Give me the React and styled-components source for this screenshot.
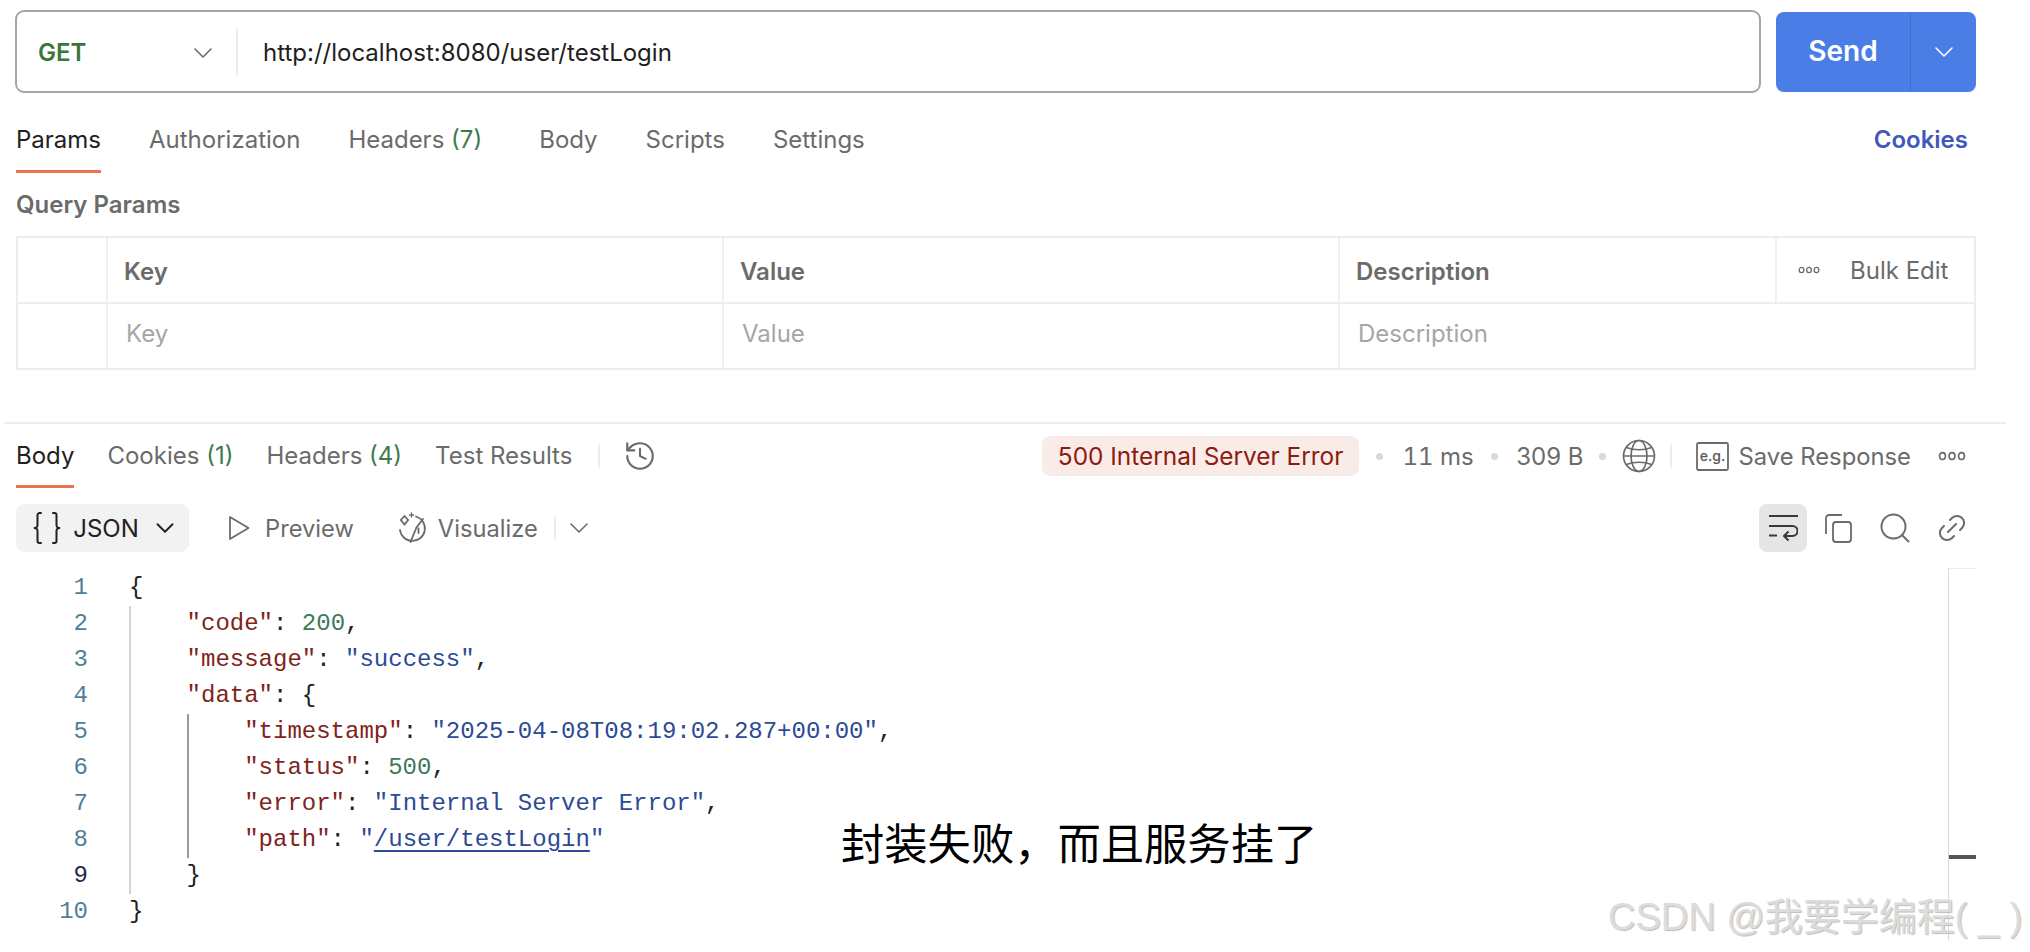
import React from 'react';
import styled, { createGlobalStyle } from 'styled-components';
import { ChevronDown, History, Search, Link2 } from 'lucide-react';

const GlobalStyle = createGlobalStyle`
  html, body {
    margin: 0;
    padding: 0;
    background: #fff;
  }
  body {
    font-family: Inter, "Noto Sans", sans-serif;
  }
  * {
    box-sizing: border-box;
  }
`;

const requestTabs = [
  { label: 'Params', active: true },
  { label: 'Authorization' },
  { label: 'Headers', count: '(7)', extra: true },
  { label: 'Body' },
  { label: 'Scripts' },
  { label: 'Settings' },
];

const responseTabs = [
  { label: 'Body', active: true },
  { label: 'Cookies', count: '(1)' },
  { label: 'Headers', count: '(4)' },
  { label: 'Test Results' },
];

// [kind, text] per token, depth = number of indent guides
const codeLines = [
  { depth: 0, tokens: [['punct', '{']] },
  { depth: 1, tokens: [['key', '"code"'], ['punct', ': '], ['num', '200'], ['punct', ',']] },
  { depth: 1, tokens: [['key', '"message"'], ['punct', ': '], ['str', '"success"'], ['punct', ',']] },
  { depth: 1, tokens: [['key', '"data"'], ['punct', ': {']] },
  { depth: 2, tokens: [['key', '"timestamp"'], ['punct', ': '], ['str', '"2025-04-08T08:19:02.287+00:00"'], ['punct', ',']] },
  { depth: 2, tokens: [['key', '"status"'], ['punct', ': '], ['num', '500'], ['punct', ',']] },
  { depth: 2, tokens: [['key', '"error"'], ['punct', ': '], ['str', '"Internal Server Error"'], ['punct', ',']] },
  { depth: 2, tokens: [['key', '"path"'], ['punct', ': '], ['str', '"'], ['link', '/user/testLogin'], ['str', '"']] },
  { depth: 1, active: true, tokens: [['punct', '}']] },
  { depth: 0, tokens: [['punct', '}']] },
];

const DotsIcon = ({ size = 28 }) => (
  <svg width={size} height={size * 0.36} viewBox="0 0 28 10" fill="none" stroke="#6b6b6b" strokeWidth="1.6">
    <ellipse cx="4.5" cy="5" rx="3" ry="3.4" />
    <ellipse cx="14" cy="5" rx="3" ry="3.4" />
    <ellipse cx="23.5" cy="5" rx="3" ry="3.4" />
  </svg>
);

const PlayIcon = () => (
  <svg width="22" height="26" viewBox="0 0 22 26" fill="none" stroke="#6b6b6b" strokeWidth="1.8" strokeLinejoin="round">
    <path d="M2 2v22L20.500 13z" />
  </svg>
);

const VisualizeIcon = () => (
  <svg width="32" height="32" viewBox="0 0 32 32" fill="none" stroke="#6b6b6b" strokeWidth="1.8" strokeLinecap="round">
    <path d="M18 4.500a12.500 12.500 0 1 1-16 13.500" />
    <path d="M6.500 4l3.600 4-3.600 4.500L2.800 8z" />
    <path d="M13.500 1v4M11.500 3h4" strokeWidth="1.3" />
    <path d="M25 7l-6.500 8.500-6 14.500" />
    <path d="M20.500 16.500v4.500" />
  </svg>
);

const GlobeIcon = () => (
  <svg width="34" height="34" viewBox="0 0 34 34" fill="none" stroke="#6b6b6b" strokeWidth="1.7">
    <circle cx="17" cy="17" r="15.500" />
    <ellipse cx="17" cy="17" rx="8" ry="15.500" />
    <path d="M4.500 8.500c7 3 18 3 25 0M4.500 25.500c7-3 18-3 25 0M1.500 17h31" />
  </svg>
);

const ExampleIcon = () => (
  <svg width="33" height="29" viewBox="0 0 33 29">
    <rect x="1" y="1" width="31" height="27" rx="1.500" fill="none" stroke="#6b6b6b" strokeWidth="1.8" />
    <text x="16.500" y="19" textAnchor="middle" fontFamily="Inter, sans-serif" fontSize="14" fontWeight="500" fill="#555">e.g.</text>
  </svg>
);

const WrapIcon = () => (
  <svg width="30" height="28" viewBox="0 0 30 28" fill="none" stroke="#3a3a3a" strokeWidth="2">
    <path d="M1 2h29M1 12h23.500a4.500 4.500 0 0 1 0 10H16" />
    <path d="M20.500 17.500L16 22l4.500 4.500M1 21.500h8" />
  </svg>
);

const CopyIcon = () => (
  <svg width="28" height="30" viewBox="0 0 28 30" fill="none" stroke="#6b6b6b" strokeWidth="1.8">
    <path d="M2 21V5a3 3 0 0 1 3-3h13" />
    <rect x="9" y="9" width="18" height="20" rx="3" />
  </svg>
);

const BracesIcon = () => (
  <svg width="30" height="34" viewBox="0 0 30 34" fill="none" stroke="#212121" strokeWidth="2" strokeLinecap="round">
    <path d="M9 2H7.500a2 2 0 0 0-2 2v9.500a3 3 0 0 1-3.500 3.500 3 3 0 0 1 3.500 3.500V30a2 2 0 0 0 2 2H9" />
    <path d="M21 2h1.500a2 2 0 0 1 2 2v9.500a3 3 0 0 0 3.500 3.500 3 3 0 0 0-3.500 3.500V30a2 2 0 0 1-2 2H21" />
  </svg>
);

const App = () => {
  return (
    <Page>
      <GlobalStyle />

      <RequestPane>
        <UrlRow>
          <UrlBox>
            <MethodSelect>
              <MethodName>GET</MethodName>
              <ChevronDown size={32} strokeWidth={1.2} color="#6b6b6b" />
            </MethodSelect>
            <UrlText>http://localhost:8080/user/testLogin</UrlText>
          </UrlBox>
          <SendGroup>
            <SendLabel>Send</SendLabel>
            <SendArrow>
              <ChevronDown size={32} strokeWidth={1.2} color="#fff" />
            </SendArrow>
          </SendGroup>
        </UrlRow>

        <TabRow>
          <Tabs $gap={48}>
            {requestTabs.map((tab) => (
              <Tab key={tab.label} $active={tab.active} $extra={tab.extra}>
                {tab.label}
                {tab.count && <TabCount> {tab.count}</TabCount>}
              </Tab>
            ))}
          </Tabs>
          <CookiesLink>Cookies</CookiesLink>
        </TabRow>

        <SectionTitle>Query Params</SectionTitle>

        <ParamsTable>
          <HeadCell />
          <HeadCell $pad={16}>Key</HeadCell>
          <HeadCell $pad={16}>Value</HeadCell>
          <HeadCell $pad={16}>Description</HeadCell>
          <BulkCell>
            <DotsIcon size={22} />
            <span>Bulk Edit</span>
          </BulkCell>
          <InputCell />
          <InputCell $pad={18}>Key</InputCell>
          <InputCell $pad={18}>Value</InputCell>
          <InputCell $pad={18} $span={2} $last>Description</InputCell>
        </ParamsTable>
      </RequestPane>

      <ResponsePane>
        <ResponseBar>
          <Tabs $gap={33}>
            {responseTabs.map((tab) => (
              <ResponseTab key={tab.label} $active={tab.active}>
                {tab.label}
                {tab.count && <TabCount> {tab.count}</TabCount>}
              </ResponseTab>
            ))}
            <HistoryWrap>
              <BarDivider />
              <History size={34} strokeWidth={1.5} color="#6b6b6b" />
            </HistoryWrap>
          </Tabs>
          <ResponseMeta>
            <StatusBadge>500 Internal Server Error</StatusBadge>
            <MetaDot />
            <MetaText $left={2} $tabular>11 ms</MetaText>
            <MetaDot />
            <MetaText $left={1.5}>309 B</MetaText>
            <MetaDot $left={-2} />
            <GlobeWrap>
              <GlobeIcon />
            </GlobeWrap>
            <MetaDivider />
            <ExampleIcon />
            <SaveText>Save Response</SaveText>
            <MoreButton>
              <DotsIcon />
            </MoreButton>
          </ResponseMeta>
        </ResponseBar>

        <ViewBar>
          <ViewLeft>
            <FormatPill>
              <BracesIcon />
              <span>JSON</span>
              <ChevronDown size={30} strokeWidth={1.5} color="#212121" />
            </FormatPill>
            <ViewOption $gap={15} $right={44}>
              <PlayIcon />
              <span>Preview</span>
            </ViewOption>
            <ViewOption $gap={8} $right={16}>
              <VisualizeIcon />
              <span>Visualize</span>
            </ViewOption>
            <BarDivider />
            <ViewChevron>
              <ChevronDown size={32} strokeWidth={1.2} color="#6b6b6b" />
            </ViewChevron>
          </ViewLeft>
          <ViewTools>
            <ToolButton $active><WrapIcon /></ToolButton>
            <ToolButton><CopyIcon /></ToolButton>
            <ToolButton><Search size={36} strokeWidth={1.3} color="#6b6b6b" /></ToolButton>
            <ToolButton><Link2 size={34} strokeWidth={1.4} color="#6b6b6b" style={{ transform: 'rotate(-45deg)' }} /></ToolButton>
          </ViewTools>
        </ViewBar>

        <CodeArea>
          <CodeLines>
            {codeLines.map((line, index) => (
              <CodeLine key={index}>
                <LineNumber $active={line.active}>{index + 1}</LineNumber>
                {Array.from({ length: line.depth }).map((_, level) => (
                  <IndentGuide key={level} $level={level} />
                ))}
                {line.tokens.map(([kind, text], i) => (
                  <Token key={i} $kind={kind}>{text}</Token>
                ))}
              </CodeLine>
            ))}
          </CodeLines>
          <Minimap>
            <MinimapMark />
          </Minimap>
        </CodeArea>
      </ResponsePane>

      <Annotation>封装失败，而且服务挂了</Annotation>
      <Watermark>CSDN @我要学编程( _ )</Watermark>
    </Page>
  );
};

export default App;

const tokenColors = {
  punct: '#212121',
  key: '#80231c',
  str: '#2d4a96',
  link: '#2d4a96',
  num: '#3d7a5a',
};

const Page = styled.div`
  position: relative;
  width: 2030px;
  height: 952px;
  overflow: hidden;
  background: #fff;
  color: #6b6b6b;
`;

const RequestPane = styled.div`
  padding: 10px 54px 0 15px;
`;

const UrlRow = styled.div`
  display: flex;
  align-items: flex-start;
  gap: 15px;
`;

const UrlBox = styled.div`
  flex: 1;
  height: 83px;
  display: flex;
  align-items: center;
  border: 2px solid #a6a6a6;
  border-radius: 9px;
`;

const MethodSelect = styled.div`
  width: 221px;
  height: 48px;
  padding: 2px 17px 0 21px;
  display: flex;
  align-items: center;
  justify-content: space-between;
  border-right: 2px solid #ededed;
`;

const MethodName = styled.span`
  font-size: 24px;
  font-weight: 600;
  color: #38763c;
`;

const UrlText = styled.span`
  margin: 2px 0 0 25px;
  font-size: 24px;
  color: #212121;
`;

const SendGroup = styled.div`
  width: 200px;
  height: 80px;
  margin-top: 2px;
  display: flex;
  background: #4b7de6;
  border-radius: 8px;
  color: #fff;
`;

const SendLabel = styled.div`
  width: 134px;
  padding-bottom: 2px;
  display: flex;
  align-items: center;
  justify-content: center;
  font-size: 28px;
  font-weight: 600;
`;

const SendArrow = styled.div`
  flex: 1;
  display: flex;
  align-items: center;
  justify-content: center;
  border-left: 1px solid #3f6dd0;
`;

const TabRow = styled.div`
  margin: 31px 8px 0 1px;
  display: flex;
  justify-content: space-between;
`;

const Tabs = styled.div`
  display: flex;
  gap: ${(props) => props.$gap}px;
`;

const Tab = styled.div`
  height: 49px;
  padding-bottom: 14px;
  margin-right: ${(props) => (props.$extra ? 9 : 0)}px;
  font-size: 24px;
  line-height: 32px;
  white-space: pre;
  color: ${(props) => (props.$active ? '#212121' : '#6b6b6b')};
  border-bottom: 3px solid ${(props) => (props.$active ? '#e8764c' : 'transparent')};
`;

const ResponseTab = styled(Tab)`
  line-height: 34px;
`;

const TabCount = styled.span`
  color: #3f7a4a;
`;

const CookiesLink = styled.div`
  font-size: 24px;
  line-height: 32px;
  font-weight: 600;
  color: #4257bd;
`;

const SectionTitle = styled.div`
  margin: 17px 0 16px 1px;
  font-size: 24px;
  line-height: 30px;
  font-weight: 600;
  color: #6b6b6b;
`;

const ParamsTable = styled.div`
  margin-left: 1px;
  display: grid;
  grid-template-columns: 90px 616px 616px 437px 1fr;
  grid-template-rows: 66px 64px;
  border: 2px solid #ededed;
`;

const HeadCell = styled.div`
  display: flex;
  align-items: center;
  padding: 2px 0 0 ${(props) => props.$pad || 0}px;
  font-size: 24px;
  font-weight: 600;
  color: #6b6b6b;
  border-right: 2px solid #f0f0f0;
  border-bottom: 2px solid #ededed;
`;

const BulkCell = styled.div`
  display: flex;
  align-items: center;
  gap: 30px;
  padding-left: 21px;
  font-size: 24px;
  color: #6b6b6b;
  border-bottom: 2px solid #ededed;
`;

const InputCell = styled.div`
  grid-column: span ${(props) => props.$span || 1};
  display: flex;
  align-items: center;
  padding: 0 0 5px ${(props) => props.$pad || 0}px;
  font-size: 24px;
  color: #a6a6a6;
  border-right: ${(props) => (props.$last ? 'none' : '2px solid #f0f0f0')};
`;

const ResponsePane = styled.div`
  margin: 52px 0 0 4px;
  width: 2002px;
  padding-left: 12px;
  border-top: 2px solid #ededed;
`;

const ResponseBar = styled.div`
  padding: 15px 40px 0 0;
  height: 64px;
  display: flex;
  justify-content: space-between;
  align-items: flex-start;
`;

const HistoryWrap = styled.div`
  display: flex;
  align-items: center;
  gap: 23px;
  height: 34px;
  margin-left: -7px;
`;

const BarDivider = styled.div`
  width: 2px;
  height: 24px;
  background: #ededed;
`;

const MetaDivider = styled(BarDivider)`
  margin: 0 7px 0 -3px;
`;

const ResponseMeta = styled.div`
  margin-top: -3px;
  display: flex;
  align-items: center;
  gap: 17px;
`;

const StatusBadge = styled.div`
  height: 40px;
  padding: 0 16px;
  display: flex;
  align-items: center;
  font-size: 24.4px;
  color: #8e1a10;
  background: #f9ebe8;
  border-radius: 8px;
`;

const MetaDot = styled.span`
  width: 7px;
  height: 7px;
  margin-left: ${(props) => props.$left || 0}px;
  border-radius: 50%;
  background: #d9d9d9;
`;

const MetaText = styled.span`
  margin-left: ${(props) => props.$left || 0}px;
  font-size: 24px;
  font-variant-numeric: ${(props) => (props.$tabular ? 'tabular-nums' : 'normal')};
  color: #6b6b6b;
`;

const SaveText = styled(MetaText)`
  margin-left: -7px;
  font-size: 23.8px;
`;

const GlobeWrap = styled.span`
  display: flex;
  margin-left: -1px;
`;

const MoreButton = styled.span`
  display: flex;
  margin-left: 10px;
`;

const ViewBar = styled.div`
  margin-top: 16px;
  padding-right: 30px;
  height: 48px;
  display: flex;
  justify-content: space-between;
`;

const ViewLeft = styled.div`
  display: flex;
  align-items: center;
`;

const FormatPill = styled.div`
  width: 173px;
  height: 48px;
  margin-right: 39px;
  padding: 0 9px 0 16px;
  display: flex;
  align-items: center;
  justify-content: space-between;
  font-size: 24px;
  color: #212121;
  background: #f2f2f2;
  border-radius: 9px;
`;

const ViewOption = styled.div`
  display: flex;
  align-items: center;
  gap: ${(props) => props.$gap}px;
  margin-right: ${(props) => props.$right}px;
  font-size: 23.7px;
  color: #6b6b6b;
`;

const ViewChevron = styled.span`
  display: flex;
  margin-left: 7px;
`;

const ViewTools = styled.div`
  display: flex;
  align-items: center;
  gap: 9px;
`;

const ToolButton = styled.div`
  width: 48px;
  height: 48px;
  margin-right: ${(props) => (props.$active ? -2 : 0)}px;
  display: flex;
  align-items: center;
  justify-content: center;
  background: ${(props) => (props.$active ? '#e6e6e6' : 'transparent')};
  border-radius: 8px;
`;

const CodeArea = styled.div`
  margin-top: 16px;
  display: flex;
  justify-content: space-between;
`;

const CodeLines = styled.div`
  padding-top: 2px;
`;

const CodeLine = styled.div`
  display: flex;
  height: 36px;
  font-family: "Liberation Mono", "DejaVu Sans Mono", monospace;
  font-size: 24px;
  line-height: 36px;
  white-space: pre;
`;

const LineNumber = styled.span`
  width: 113px;
  padding-right: 41px;
  text-align: right;
  color: ${(props) => (props.$active ? '#1d2a52' : '#4f7f99')};
`;

const IndentGuide = styled.span`
  width: 57.6px;
  box-shadow: inset 2px 0 0 ${(props) => (props.$level === 0 ? '#d4d4d4' : '#9a9a9a')};
`;

const Token = styled.span`
  color: ${(props) => tokenColors[props.$kind]};
  ${(props) => props.$kind === 'link' && 'text-decoration: underline; text-decoration-thickness: 2px; text-underline-offset: 4px;'}
`;

const Minimap = styled.div`
  position: relative;
  width: 28px;
  height: 372px;
  margin-right: 30px;
  border-left: 1px solid #d9d9d9;
  border-top: 1px solid #ededed;
`;

const MinimapMark = styled.div`
  position: absolute;
  left: 0;
  top: 286px;
  width: 100%;
  height: 4px;
  background: #555;
`;

const Annotation = styled.div`
  position: absolute;
  left: 841px;
  top: 810px;
  font-family: "Noto Sans CJK SC", sans-serif;
  font-size: 43.3px;
  line-height: 62px;
  color: #000;
`;

const Watermark = styled.div`
  position: absolute;
  left: 1608px;
  top: 894px;
  font-family: "Liberation Sans", "Noto Sans CJK SC", sans-serif;
  font-size: 38px;
  line-height: 46px;
  white-space: nowrap;
  color: #dcdcdc;
  text-shadow: 1px 1px 1px #bdbdbd;
`;
